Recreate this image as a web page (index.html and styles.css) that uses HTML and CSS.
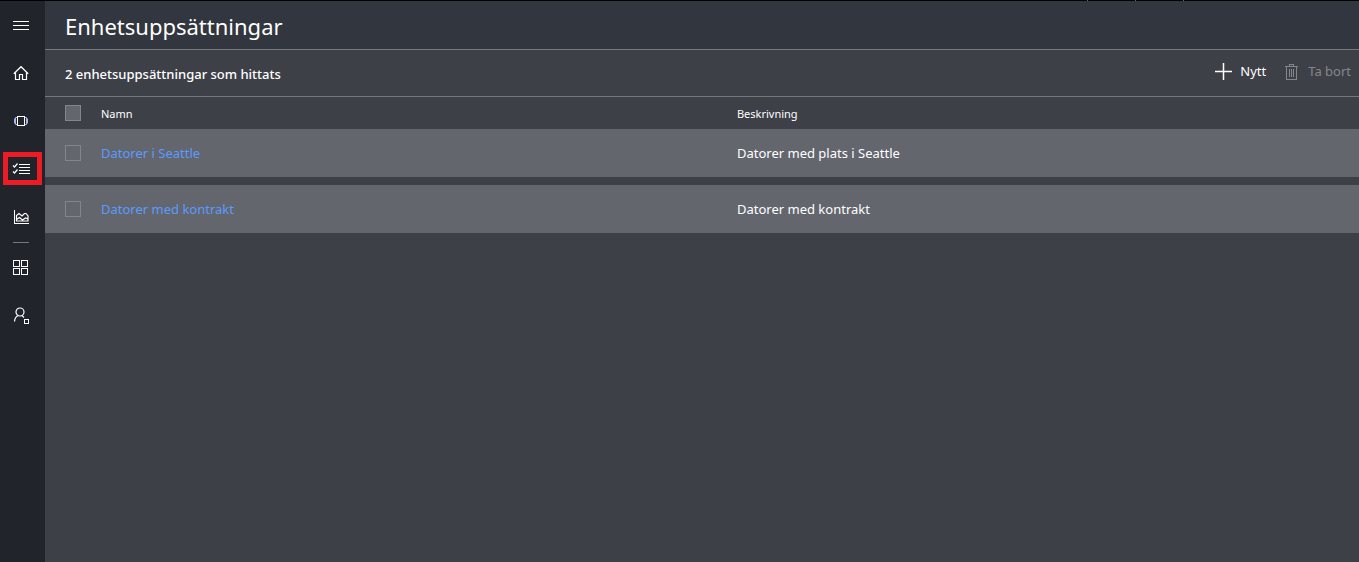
FILE: index.html
```html
<!DOCTYPE html>
<html lang="sv">
<head>
<meta charset="utf-8">
<meta name="viewport" content="width=device-width, initial-scale=1">
<title>Enhetsuppsättningar</title>
<link rel="stylesheet" href="styles.css">
</head>
<body>
<div class="top-strip"><span class="tick"></span><span class="tick"></span><span class="tick"></span></div>
<div class="app">
  <nav class="sidebar" aria-label="Huvudmeny">
    <button class="nav-item" type="button" aria-label="Meny">
      <svg class="icon" viewBox="0 0 18 18"><path class="crisp" d="M1 5.500h16M1 9.500h16M1 13.500h16"/></svg>
    </button>
    <a class="nav-item" href="#home" aria-label="Start">
      <svg class="icon" viewBox="0 0 18 18"><path d="M1.800 9.700 9 2.700l7.200 7M3.500 8.500v7h4v-5h3v5h4v-7"/></svg>
    </a>
    <a class="nav-item" href="#devices" aria-label="Enheter">
      <svg class="icon" viewBox="0 0 18 18"><path class="crisp" d="M5.500 4.500h7v9h-7z"/><path class="side" d="M5 5.500H3.500v7H5M13 5.500h1.500v7H13M2.500 6.500v5M15.500 6.500v5"/></svg>
    </a>
    <a class="nav-item selected" href="#sets" aria-label="Enhetsuppsättningar" aria-current="page">
      <svg class="icon" viewBox="0 0 18 18"><path class="crisp" d="M7 4.500h11M7 7.500h11M7 10.500h11M7 13.500h11"/><path d="m1 5.500 1.500 1.500L5.500 3.500M1 11.500l1.500 1.500L5.500 9.500"/></svg>
    </a>
    <a class="nav-item" href="#insights" aria-label="Insikter">
      <svg class="icon" viewBox="0 0 18 18"><path class="crisp" d="M2.500 2v13.500H17"/><path d="M4.500 13V7.500L7 5.500l3 2.500 2.500-2.500h1.500l2 2.500v5zM4.500 11.500l3-2 3 2.500 3-2 2.500 1"/></svg>
    </a>
    <hr class="nav-divider">
    <a class="nav-item" href="#apps" aria-label="Appar">
      <svg class="icon" viewBox="0 0 18 18"><path class="crisp" d="M1.500 2.500h6v6h-6zM9.500 2.500h6v6h-6zM1.500 10.500h6v6h-6zM9.500 10.500h6v6h-6z"/></svg>
    </a>
    <a class="nav-item" href="#account" aria-label="Konto">
      <svg class="icon" viewBox="0 0 18 18"><circle cx="8" cy="6" r="4"/><path d="M2.500 15.500c.2-3 1.500-5 3.800-6M9.800 9.300l2.200 2.200"/><path class="crisp" d="M12.500 13.500h4v4h-4z"/></svg>
    </a>
  </nav>
  <main class="content">
    <header class="page-header"><h1 class="title">Enhetsuppsättningar</h1></header>
    <div class="toolbar">
      <h2 class="count">2 enhetsuppsättningar som hittats</h2>
      <div class="actions">
        <button class="action" type="button">
          <svg class="icon" viewBox="0 0 18 18"><path class="plus" d="M1 9.500h17M9.500 1v17"/></svg>Nytt
        </button>
        <button class="action" type="button" disabled>
          <svg class="icon" viewBox="0 0 18 18"><path class="crisp" d="M3 4.500h13M7.500 4V2.500h4V4M4.500 5v12.500h10V5M7.500 7v8M9.500 7v8M11.500 7v8"/></svg>Ta bort
        </button>
      </div>
    </div>
    <table class="sets">
      <thead>
        <tr>
          <th class="check-col"><input class="check all" type="checkbox" aria-label="Markera alla"></th>
          <th class="name-col" scope="col">Namn</th>
          <th scope="col">Beskrivning</th>
        </tr>
      </thead>
      <tbody>
        <tr>
          <td><input class="check" type="checkbox" aria-label="Markera Datorer i Seattle"></td>
          <td><a class="set-link" href="#seattle">Datorer i Seattle</a></td>
          <td>Datorer med plats i Seattle</td>
        </tr>
        <tr>
          <td><input class="check" type="checkbox" aria-label="Markera Datorer med kontrakt"></td>
          <td><a class="set-link" href="#kontrakt">Datorer med kontrakt</a></td>
          <td>Datorer med kontrakt</td>
        </tr>
      </tbody>
    </table>
  </main>
</div>
</body>
</html>
```

FILE: styles.css
```css
* { box-sizing: border-box; }

body {
  display: flex;
  flex-direction: column;
  min-height: 100vh;
  margin: 0;
  background: #3e4048;
  color: #fff;
  font-family: "Segoe UI", "Noto Sans", "Open Sans", sans-serif;
  font-size: 13px;
}

.top-strip {
  display: flex;
  justify-content: flex-end;
  gap: 47px;
  height: 1px;
  padding-right: 175px;
  background: #000;
}

.tick { width: 1px; background: #666; }

.app { display: flex; flex: 1; }

.sidebar {
  display: flex;
  flex: 0 0 45px;
  flex-direction: column;
  align-items: flex-start;
  background: #22242c;
}

.nav-item {
  display: flex;
  align-items: center;
  justify-content: center;
  width: 42px;
  height: 48px;
  padding: 0;
  border: 0;
  background: none;
  color: #fff;
}

.selected {
  justify-content: flex-start;
  width: 39px;
  height: 33px;
  margin: 7px 3px 8px;
  padding-left: 4px;
  border: 5px solid #ed1c24;
}

.nav-divider {
  width: 16px;
  height: 1px;
  margin: 1px 13px 0;
  border: 0;
  background: #77777a;
}

.icon {
  flex: none;
  width: 18px;
  height: 18px;
  fill: none;
  stroke: currentColor;
  stroke-width: 1.2;
}

.crisp { stroke-width: 1; shape-rendering: crispEdges; }
.side { stroke: #a9b4e8; stroke-width: 1; }
.plus { stroke-width: 1.5; }

.content { flex: 1; min-width: 0; }

.page-header {
  display: flex;
  align-items: center;
  height: 49px;
  padding: 2px 20px 0;
  border-bottom: 1px solid #77777a;
  background: #32363e;
}

.title { margin: 0; font-size: 22px; font-weight: 400; line-height: 32px; }

.toolbar {
  display: flex;
  align-items: center;
  justify-content: space-between;
  height: 47px;
  padding: 0 8px 0 20px;
  border-bottom: 1px solid #77777a;
}

.count { margin: 2px 0 0; font-size: 13px; font-weight: 500; line-height: 20px; }

.actions { display: flex; gap: 16px; padding-bottom: 4px; }

.action {
  display: flex;
  align-items: center;
  gap: 8px;
  padding: 0;
  border: 0;
  background: none;
  color: #fff;
  font: inherit;
  line-height: 20px;
}

.action:disabled { color: #85868a; }

.sets {
  width: 100%;
  border-spacing: 0;
  table-layout: fixed;
}

.sets th, .sets td { padding: 0; text-align: left; vertical-align: middle; }
.sets th { height: 32px; font-size: 11px; font-weight: 400; }
.sets .check-col { width: 56px; }
.sets .name-col { width: 48.4%; }

.sets td {
  height: 56px;
  border-bottom: 8px solid #3e4048;
  background: #64666e;
}

.check {
  display: block;
  width: 16px;
  height: 16px;
  margin: 0 20px;
  border: 1px solid #858585;
  appearance: none;
}

.all { background: #64666e; }

.set-link { color: #5a9bff; text-decoration: none; }
```
